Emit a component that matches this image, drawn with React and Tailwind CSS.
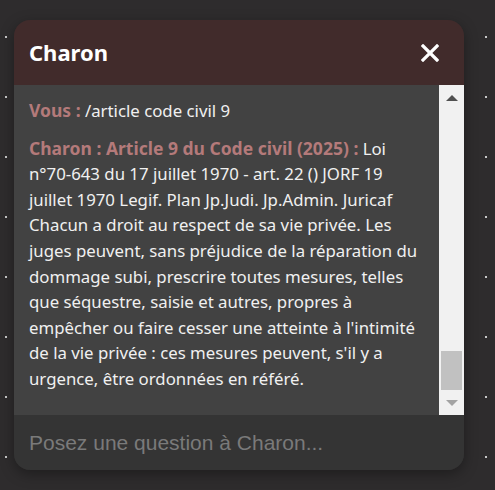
import React from 'react'

// Fenêtre de chat "Charon" sur fond pointillé
const reponse = [
  'n°70-643 du 17 juillet 1970 - art. 22 () JORF 19',
  'juillet 1970 Legif. Plan Jp.Judi. Jp.Admin. Juricaf',
  'Chacun a droit au respect de sa vie privée. Les',
  'juges peuvent, sans préjudice de la réparation du',
  'dommage subi, prescrire toutes mesures, telles',
  'que séquestre, saisie et autres, propres à',
  "empêcher ou faire cesser une atteinte à l'intimité",
  "de la vie privée : ces mesures peuvent, s'il y a",
  'urgence, être ordonnées en référé.',
]

function Scrollbar() {
  return (
    <div className="w-[25px] bg-[#f1f1f1] flex flex-col items-center">
      <div className="h-[25px] flex items-center justify-center">
        <div className="w-0 h-0 border-l-[6px] border-r-[6px] border-b-[6px] border-l-transparent border-r-transparent border-b-[#505050]" />
      </div>
      <div className="flex-1 w-full flex flex-col justify-end px-[2px]">
        <div className="h-[39px] bg-[#c1c1c1]" />
      </div>
      <div className="h-[25px] flex items-center justify-center">
        <div className="w-0 h-0 border-l-[6px] border-r-[6px] border-t-[6px] border-l-transparent border-r-transparent border-t-[#a3a3a3]" />
      </div>
    </div>
  )
}

export default function App() {
  return (
    <div className="w-[495px] h-[490px] bg-[#2e2c2d] bg-[radial-gradient(circle,#c8c8c8_1px,transparent_1.5px)] bg-[length:60px_60px] bg-[position:-24px_7px] pt-[20px] pl-[14px]">
      <div className="w-[450px] h-[450px] rounded-[16px] overflow-hidden flex flex-col shadow-[0_4px_14px_rgba(0,0,0,0.35)] font-['Noto_Sans',sans-serif]">
        {/* entête */}
        <div className="h-[65px] bg-[#412b2b] flex items-center justify-between pl-[15px] pr-[25px]">
          <h1 className="text-white text-[22px] font-bold">Charon</h1>
          <svg width="18" height="18" viewBox="0 0 18 18">
            <path d="M2 2 L16 16 M16 2 L2 16" stroke="white" strokeWidth="3.2" strokeLinecap="square" />
          </svg>
        </div>

        {/* messages */}
        <div className="h-[330px] flex bg-[#424242]">
          <div className="flex-1 px-[15px] pt-[13px] text-[16.8px] leading-[25.6px] text-[#f0f0f0] space-y-[12px] overflow-hidden whitespace-nowrap">
            <p>
              <span className="font-bold text-[17.5px] text-[#b47a7a]">Vous :</span> /article code civil 9
            </p>
            <p>
              <span className="font-bold text-[17.5px] text-[#b47a7a]">Charon : Article 9 du Code civil (2025) :</span> Loi
              {reponse.map((l, i) => (
                <React.Fragment key={i}>
                  <br />
                  {l}
                </React.Fragment>
              ))}
            </p>
          </div>
          <Scrollbar />
        </div>

        {/* saisie */}
        <div className="flex-1 bg-[#343434] flex items-center px-[15px]">
          <input
            className="w-full bg-transparent outline-none text-[21px] text-white placeholder:text-[#7a7a7a] font-['Liberation_Sans',sans-serif]"
            placeholder="Posez une question à Charon..."
          />
        </div>
      </div>
    </div>
  )
}
